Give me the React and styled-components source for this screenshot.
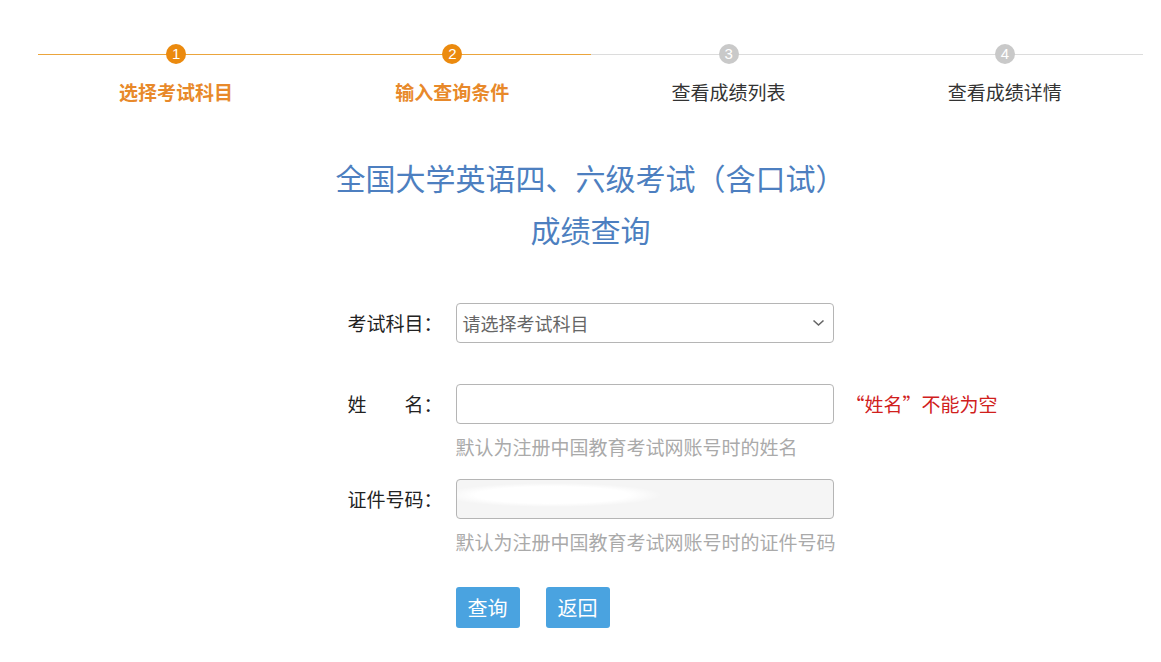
import React from "react";
import styled, { createGlobalStyle } from "styled-components";

const GlobalStyle = createGlobalStyle`
  body {
    margin: 0;
    background: #fff;
    font-family: "Noto Sans CJK SC", "Noto Sans", sans-serif;
    color: #333;
  }
`;

// Whole page column
const Page = styled.div`
  width: 1105px;
  margin-left: 38px;
  padding-top: 44px;
`;

// Step progress bar
const Steps = styled.div`
  display: grid;
  grid-template-columns: repeat(4, 1fr);
`;

const Step = styled.div`
  display: flex;
  flex-direction: column;
  align-items: center;
`;

// Head holds the line and the round number
const StepHead = styled.div`
  position: relative;
  width: 100%;
  height: 20px;
  display: flex;
  justify-content: center;

  &::before {
    content: "";
    position: absolute;
    left: 0;
    right: 0;
    top: 10px;
    height: 1px;
    background: ${(p) => (p.active ? "#eba53c" : "#dcdcdc")};
  }
`;

const StepNum = styled.span`
  position: relative;
  width: 20px;
  height: 20px;
  border-radius: 50%;
  background: ${(p) => (p.active ? "#eb8a0e" : "#c9c9c9")};
  color: #fff;
  font-family: "Liberation Sans", Arial, sans-serif;
  font-size: 15px;
  line-height: 20px;
  text-align: center;
`;

const StepLabel = styled.div`
  margin-top: 15px;
  font-size: 19px;
  line-height: 26px;
  font-weight: ${(p) => (p.active ? 700 : 400)};
  color: ${(p) => (p.active ? "#e8892a" : "#333")};
`;

// Blue page title
const Title = styled.h1`
  margin: 46px 0 0;
  text-align: center;
  font-size: 30px;
  line-height: 52px;
  font-weight: 400;
  color: #4d7fc0;
`;

const Form = styled.form`
  width: 486px;
  margin: 48px auto 0;
`;

const Row = styled.div`
  display: grid;
  grid-template-columns: 108px 378px 0;
  align-items: center;
  margin-top: ${(p) => p.gap || 0}px;
`;

const Label = styled.label`
  font-size: 19px;
  line-height: 24px;
  color: #222;
  white-space: pre;
`;

const SelectBox = styled.div`
  height: 40px;
  box-sizing: border-box;
  border: 1px solid #b5b5b5;
  border-radius: 4px;
  display: flex;
  align-items: center;
  justify-content: space-between;
  padding: 0 8px 0 6px;
  font-size: 18px;
  color: #666;
`;

const TextInput = styled.input`
  height: 40px;
  box-sizing: border-box;
  border: 1px solid #b5b5b5;
  border-radius: 4px;
  padding: 0 8px;
  font: inherit;
  font-size: 18px;
  outline: none;
  background: ${(p) =>
    p.filled
      ? "radial-gradient(ellipse 110px 12px at 95px 15px, #fff 0%, #fff 70%, rgba(255,255,255,0) 100%), #f5f5f5"
      : "#fff"};
`;

const Error = styled.span`
  margin-left: 12px;
  white-space: nowrap;
  font-size: 19px;
  line-height: 24px;
  color: #d0201c;
`;

const Hint = styled.div`
  margin: 11px 0 0 108px;
  font-size: 19px;
  line-height: 24px;
  color: #aaa;
  white-space: nowrap;
`;

const Buttons = styled.div`
  display: flex;
  gap: 26px;
  margin: 33px 0 0 108px;
`;

const Button = styled.button`
  height: 41px;
  padding: 0 12px;
  border: none;
  border-radius: 3px;
  background: #4aa3e0;
  color: #fff;
  font-family: inherit;
  font-size: 20px;
  cursor: pointer;
`;

const steps = [
  { label: "选择考试科目", active: true },
  { label: "输入查询条件", active: true },
  { label: "查看成绩列表", active: false },
  { label: "查看成绩详情", active: false },
];

const Chevron = () => (
  <svg width="13" height="8" viewBox="0 0 13 8">
    <polyline points="1.5,1.5 6.5,6 11.5,1.5" fill="none" stroke="#666" strokeWidth="1.6" />
  </svg>
);

export default function App() {
  return (
    <Page>
      <GlobalStyle />
      <Steps>
        {steps.map((s, i) => (
          <Step key={s.label}>
            <StepHead active={s.active}>
              <StepNum active={s.active}>{i + 1}</StepNum>
            </StepHead>
            <StepLabel active={s.active}>{s.label}</StepLabel>
          </Step>
        ))}
      </Steps>

      <Title>
        全国大学英语四、六级考试（含口试）
        <br />
        成绩查询
      </Title>

      <Form onSubmit={(e) => e.preventDefault()}>
        <Row>
          <Label>考试科目：</Label>
          <SelectBox>
            <span>请选择考试科目</span>
            <Chevron />
          </SelectBox>
        </Row>

        <Row gap={41}>
          <Label>{"姓\u2003\u2003名："}</Label>
          <TextInput />
          <Error>“姓名”不能为空</Error>
        </Row>
        <Hint>默认为注册中国教育考试网账号时的姓名</Hint>

        <Row gap={20}>
          <Label>证件号码：</Label>
          <TextInput filled />
        </Row>
        <Hint>默认为注册中国教育考试网账号时的证件号码</Hint>

        <Buttons>
          <Button type="submit">查询</Button>
          <Button type="button">返回</Button>
        </Buttons>
      </Form>
    </Page>
  );
}
